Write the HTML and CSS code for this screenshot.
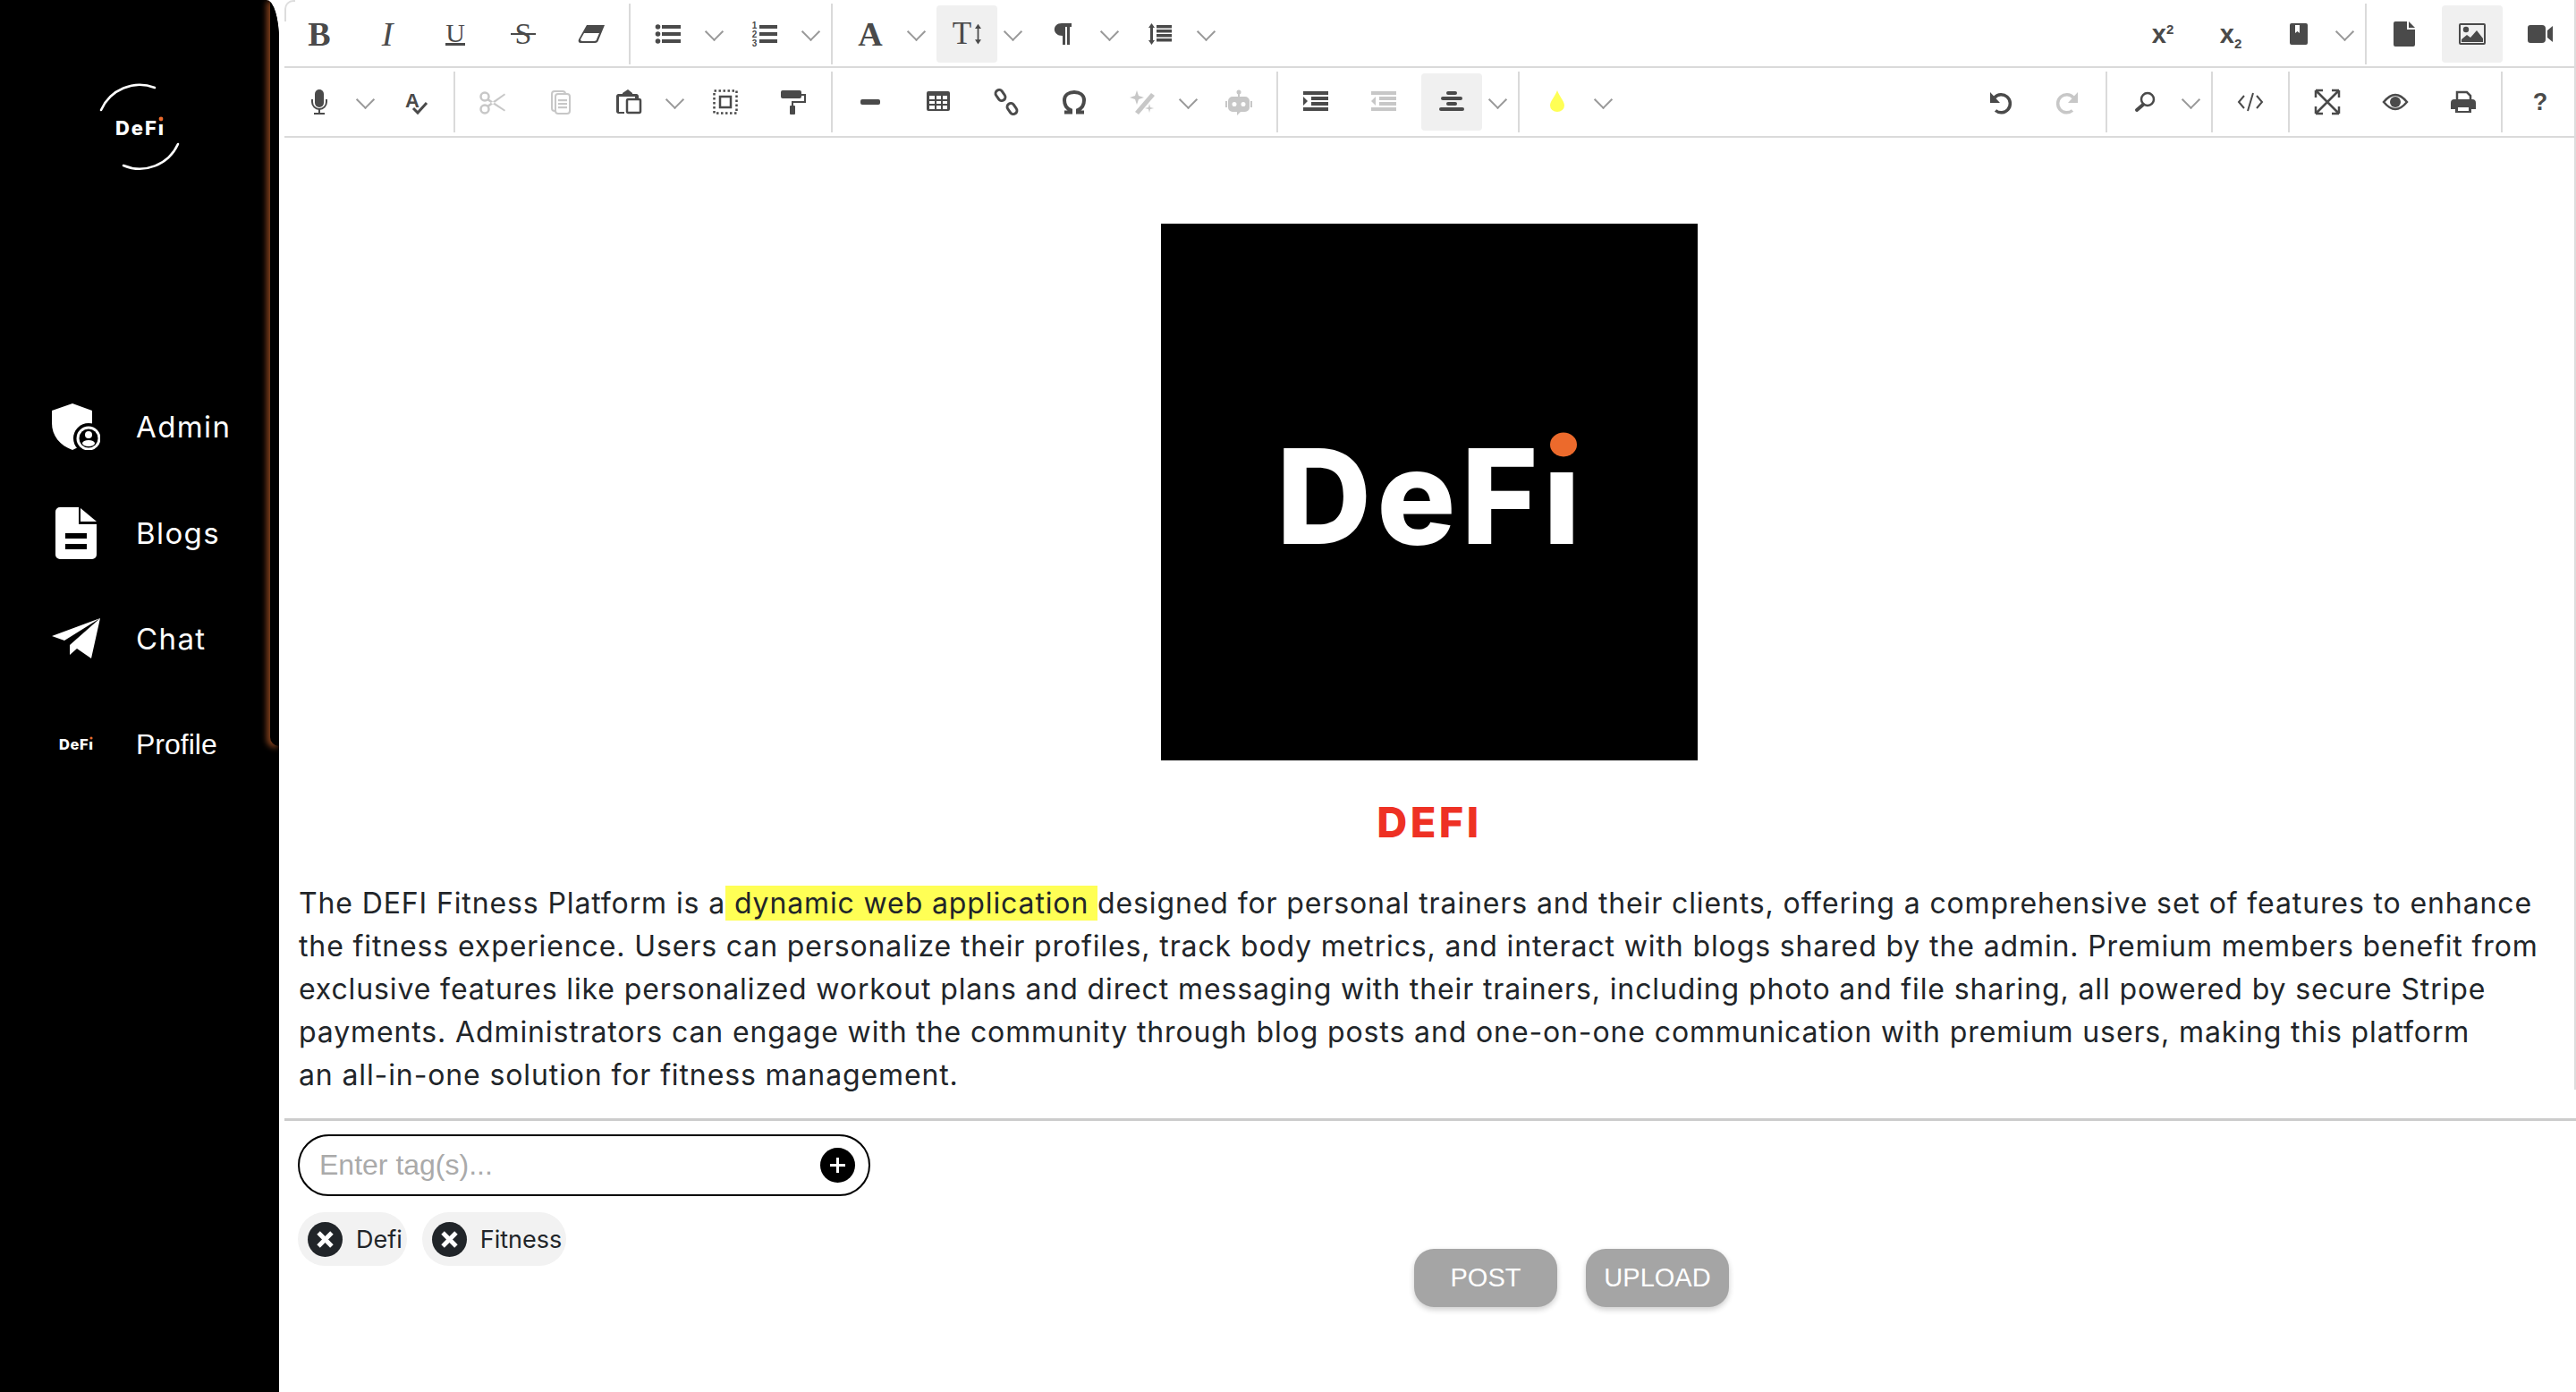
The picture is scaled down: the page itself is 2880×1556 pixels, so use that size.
FILE: index.html
```html
<!DOCTYPE html>
<html>
<head>
	<title>DeFi Blog Editor</title>
	<link rel="stylesheet" href="styles.css">
</head>
<body>
	<aside class="sidebar">
		<div class="brand">
			<svg width="120" height="120" viewBox="0 0 120 120">
				<path d="M17 41A47 47 0 0 1 77 16M103 79A47 47 0 0 1 42 103" fill="none" stroke="#fff" stroke-width="2.6" stroke-linecap="round"/>
				<text x="33" y="69" class="logo-text" font-size="22" textLength="54">DeFı</text>
				<circle cx="84" cy="51" r="2.4" fill="#ec6a2c"/>
			</svg>
		</div>
		<nav class="nav">
			<a class="nav-item">
				<span class="nav-icon">
					<svg width="54" height="52" viewBox="0 0 54 52">
						<path d="M23 0L45 8V24C45 36 36 47 23 52C9 47 0 36 0 22V8Z" fill="#fff"/>
						<circle cx="41" cy="39" r="17" fill="#000"/>
						<circle cx="41" cy="39" r="13.500" fill="#fff"/>
						<circle cx="41" cy="39" r="10.500" fill="#000"/>
						<circle cx="41" cy="35" r="4" fill="#fff"/>
						<ellipse cx="41" cy="44.500" rx="7" ry="3.500" fill="#fff"/>
					</svg>
				</span>
				<span>Admin</span>
			</a>
			<a class="nav-item">
				<span class="nav-icon">
					<svg width="46" height="58" viewBox="0 0 46 58">
						<path d="M5 0H26V19H46V53A5 5 0 0 1 41 58H5A5 5 0 0 1 0 53V5A5 5 0 0 1 5 0ZM11 29V35H35V29ZM11 41V47H35V41Z" fill="#fff" fill-rule="evenodd"/>
						<path d="M28 1L46 16H28Z" fill="#fff"/>
					</svg>
				</span>
				<span>Blogs</span>
			</a>
			<a class="nav-item">
				<span class="nav-icon">
					<svg width="54" height="46" viewBox="0 0 54 46">
						<path d="M54 0L0 20L14 25ZM54 0L20 30V41L28 34L44 45Z" fill="#fff"/>
					</svg>
				</span>
				<span>Chat</span>
			</a>
			<a class="nav-item nav-profile">
				<span class="nav-icon">
					<svg width="40" height="24" viewBox="0 0 40 24">
						<text x="1" y="18" class="logo-text" font-size="16.500" textLength="38">DeFı</text>
						<circle cx="37" cy="5" r="1.600" fill="#ec6a2c"/>
					</svg>
				</span>
				<span>Profile</span>
			</a>
		</nav>
	</aside>

	<main class="main">
		<section class="editor">
			<div class="editor-inner">
				<div class="toolbar">
					<div class="row row-first">
						<button class="tool txt-b">B</button>
						<button class="tool txt-i">I</button>
						<button class="tool txt-u"><span>U</span></button>
						<button class="tool txt-s"><span>S</span></button>
						<button class="tool"><svg viewBox="0 0 30 36"><path d="M10 8H30L23 25A4 4 0 0 1 19 28H3C1 28 0 26 1 24ZM7 17L3 24Q3 26 5 26H18C20 26 21 25 21 24L24 17Z" fill-rule="evenodd"/></svg></button>
						<span class="sep"></span>
						<button class="tool"><svg viewBox="0 0 30 36"><circle cx="3.500" cy="10" r="2.800"/><circle cx="3.500" cy="18" r="2.800"/><circle cx="3.500" cy="26" r="2.800"/><rect x="8" y="8" width="21" height="4"/><rect x="8" y="16" width="21" height="4"/><rect x="8" y="24" width="21" height="4"/></svg></button>
						<span class="chev"></span>
						<button class="tool"><svg viewBox="0 0 30 36"><text x="3.500" y="12" class="glyph-small" text-anchor="middle" font-size="10">1</text><text x="3.500" y="22" class="glyph-small" text-anchor="middle" font-size="10">2</text><text x="3.500" y="32" class="glyph-small" text-anchor="middle" font-size="10">3</text><rect x="9" y="8" width="20" height="4"/><rect x="9" y="16" width="20" height="4"/><rect x="9" y="24" width="20" height="4"/></svg></button>
						<span class="chev"></span>
						<span class="sep"></span>
						<button class="tool txt-b">A</button>
						<span class="chev"></span>
						<button class="tool is-on txt-t">T<svg class="arrow" viewBox="0 0 8 26"><path d="M4 0L8 6H5V20H8L4 26L0 20H3V6H0Z"/></svg></button>
						<span class="chev"></span>
						<button class="tool"><svg viewBox="0 0 30 36"><path d="M13 6H24V10H22V30H19V10H17V30H14V20C2 20 2 6 13 6Z"/></svg></button>
						<span class="chev"></span>
						<button class="tool"><svg viewBox="0 0 30 36"><path d="M5.500 6L9 11H7V25H9L5.500 30L2 25H4V11H2Z"/><rect x="11" y="8" width="17" height="3.500"/><rect x="11" y="13" width="17" height="3.500"/><rect x="11" y="18" width="17" height="3.500"/><rect x="11" y="23" width="17" height="3.500"/></svg></button>
						<span class="chev"></span>

						<span class="push"></span>
						<button class="tool txt-x"><span>x<sup>2</sup></span></button>
						<button class="tool txt-x"><span>x<sub>2</sub></span></button>
						<button class="tool"><svg viewBox="0 0 30 36"><path d="M7 6H23A2 2 0 0 1 25 8V28A2 2 0 0 1 23 30H7A2 2 0 0 1 5 28V8A2 2 0 0 1 7 6ZM11 8V17L13.500 15L16 17V8Z" fill-rule="evenodd"/></svg></button>
						<span class="chev"></span>
						<span class="sep"></span>
						<button class="tool"><svg viewBox="0 0 30 36"><path d="M5 4H18V13H27V30A2 2 0 0 1 25 32H5A2 2 0 0 1 3 30V6A2 2 0 0 1 5 4Z"/><path d="M20 4L27 11H20Z"/></svg></button>
						<button class="tool is-on"><svg viewBox="0 0 30 36"><path d="M2 6H28A2 2 0 0 1 30 8V28A2 2 0 0 1 28 30H2A2 2 0 0 1 0 28V8A2 2 0 0 1 2 6ZM2 8V28H28V8Z" fill-rule="evenodd"/><circle cx="8" cy="13" r="3.200"/><path d="M3 27V24L9 19L13 22L20 14L27 23V27Z"/></svg></button>
						<button class="tool"><svg viewBox="0 0 30 36"><path d="M4 8H17A4 4 0 0 1 21 12V24A4 4 0 0 1 17 28H4A3 3 0 0 1 1 25V11A3 3 0 0 1 4 8ZM23 14L29 9V27L23 22Z"/></svg></button>
					</div>
					<div class="row">
						<button class="tool"><svg viewBox="0 0 30 36"><rect x="10" y="4" width="10" height="20" rx="5"/><path d="M7 15V18A8 8 0 0 0 23 18V15" fill="none" stroke="#4a4a4a" stroke-width="2"/><rect x="14" y="25" width="2" height="6"/><rect x="9" y="30" width="12" height="2"/></svg></button>
						<span class="chev"></span>
						<button class="tool"><svg viewBox="0 0 30 36"><text x="11" y="24" class="glyph-small" text-anchor="middle" font-size="22">A</text><path d="M12 25L17 30L27 19" fill="none" stroke="#4a4a4a" stroke-width="3"/></svg></button>
						<span class="sep"></span>
						<button class="tool is-off"><svg viewBox="0 0 30 36"><g fill="none" stroke="#4a4a4a" stroke-width="2.500"><circle cx="6" cy="12" r="4.500"/><circle cx="6" cy="26" r="4.500"/></g><path d="M10 14L29 27L28 28.500L9 16.500ZM10 24L29 10L28 8.500L9 21.500Z"/></svg></button>
						<button class="tool is-off"><svg viewBox="0 0 30 36"><rect x="5" y="6" width="15" height="22" rx="3" fill="none" stroke="#4a4a4a" stroke-width="2"/><rect x="9" y="9" width="16" height="22" rx="3" fill="#fff" stroke="#4a4a4a" stroke-width="2"/><rect x="12" y="15" width="10" height="2.200"/><rect x="12" y="19" width="10" height="2.200"/><rect x="12" y="23" width="10" height="2.200"/></svg></button>
						<button class="tool"><svg viewBox="0 0 30 36"><path d="M3 9H8V8L14 4L19 8V9H24A3 3 0 0 1 26 11V14H22V12H4V29H10V31H3A2.500 2.500 0 0 1 1 29V11A3 3 0 0 1 3 9Z"/><rect x="13" y="15" width="15" height="15" rx="1.500" fill="none" stroke="#4a4a4a" stroke-width="2.500"/></svg></button>
						<span class="chev"></span>
						<button class="tool"><svg viewBox="0 0 30 36"><rect x="2.500" y="5.500" width="25" height="25" fill="none" stroke="#4a4a4a" stroke-width="2.500" stroke-dasharray="2.500 2.500"/><rect x="9" y="12" width="12" height="12" fill="none" stroke="#4a4a4a" stroke-width="2.500"/></svg></button>
						<button class="tool"><svg viewBox="0 0 30 36"><rect x="1" y="5" width="23" height="9" rx="2"/><path d="M24 10H28V18H14V23" fill="none" stroke="#4a4a4a" stroke-width="2"/><rect x="11" y="22" width="6" height="10" rx="1"/></svg></button>
						<span class="sep"></span>
						<button class="tool"><svg viewBox="0 0 30 36"><rect x="4" y="15" width="22" height="6" rx="2"/></svg></button>
						<button class="tool"><svg viewBox="0 0 30 36"><path d="M4 6H26A2 2 0 0 1 28 8V26A2 2 0 0 1 26 28H4A2 2 0 0 1 2 26V8A2 2 0 0 1 4 6ZM5 11V15H11V11ZM13 11V15H18V11ZM20 11V15H25V11ZM5 17V20H11V17ZM13 17V20H18V17ZM20 17V20H25V17ZM5 22V26H11V22ZM13 22V26H18V22ZM20 22V26H25V22Z" fill-rule="evenodd"/></svg></button>
						<button class="tool"><svg viewBox="0 0 30 36"><g fill="none" stroke="#4a4a4a" stroke-width="3"><rect x="4.500" y="4" width="8" height="13" rx="4" transform="rotate(-35 8.500 10.500)"/><rect x="17.500" y="19" width="8" height="13" rx="4" transform="rotate(-35 21.500 25.500)"/></g></svg></button>
						<button class="tool"><svg viewBox="0 0 30 36"><path d="M4 29.500H11V27C6 25 4 21 4 16C4 10 9 7 15 7S26 10 26 16C26 21 24 25 19 27V29.500H26" fill="none" stroke="#4a4a4a" stroke-width="4"/></svg></button>
						<button class="tool is-off"><svg viewBox="0 0 30 36"><path d="M25 8L29 11L11 32L7 29Z"/><path d="M9 5L11 11L17 13L11 15L9 21L7 15L1 13L7 11ZM23 20L24 24L28 25L24 26L23 30L22 26L18 25L22 24Z"/></svg></button>
						<span class="chev"></span>
						<button class="tool is-off"><svg viewBox="0 0 30 36"><circle cx="15" cy="7" r="2.500"/><rect x="14" y="7" width="2" height="6"/><path d="M8 12H22A5 5 0 0 1 27 17V24A5 5 0 0 1 22 29H17L13 33V29H8A5 5 0 0 1 3 24V17A5 5 0 0 1 8 12ZM10 18A2.500 2.500 0 1 0 10 23A2.500 2.500 0 1 0 10 18ZM20 18A2.500 2.500 0 1 0 20 23A2.500 2.500 0 1 0 20 18Z" fill-rule="evenodd"/><rect x="0" y="17" width="2" height="7"/><rect x="28" y="17" width="2" height="7"/></svg></button>
						<span class="sep"></span>
						<button class="tool"><svg viewBox="0 0 30 36"><rect x="1" y="6" width="28" height="4"/><rect x="10" y="12" width="19" height="4"/><rect x="10" y="18" width="19" height="4"/><rect x="1" y="24" width="28" height="4"/><path d="M1 12L6 17L1 22Z"/></svg></button>
						<button class="tool is-off"><svg viewBox="0 0 30 36"><rect x="1" y="6" width="28" height="4"/><rect x="10" y="12" width="19" height="4"/><rect x="10" y="18" width="19" height="4"/><rect x="1" y="24" width="28" height="4"/><path d="M6 12L1 17L6 22Z"/></svg></button>
						<button class="tool is-on"><svg viewBox="0 0 30 36"><rect x="9" y="6" width="12" height="4" rx="2"/><rect x="3" y="12" width="24" height="4" rx="2"/><rect x="9" y="18" width="12" height="4" rx="2"/><rect x="1" y="24" width="28" height="4" rx="2"/></svg></button>
						<span class="chev"></span>
						<span class="sep"></span>
						<button class="tool"><svg viewBox="0 0 30 36"><path d="M15 5C17 11 23 17 23 22A8 7 0 0 1 7 22C7 17 13 11 15 5Z" fill="#ffff55"/></svg></button>
						<span class="chev"></span>

						<span class="push"></span>
						<button class="tool"><svg viewBox="0 0 30 36"><path d="M9 13A10 10 0 1 1 10 27.500" fill="none" stroke="#4a4a4a" stroke-width="3.500"/><path d="M4 7V19H15Z"/></svg></button>
						<button class="tool is-off"><svg viewBox="0 0 30 36"><path d="M21 13A10 10 0 1 0 20 27.500" fill="none" stroke="#4a4a4a" stroke-width="3.500"/><path d="M26 7V19H15Z"/></svg></button>
						<span class="sep"></span>
						<button class="tool"><svg viewBox="0 0 30 36"><circle cx="18" cy="15" r="7" fill="none" stroke="#4a4a4a" stroke-width="2.500"/><path d="M13 21L6 27" stroke="#4a4a4a" stroke-width="4" stroke-linecap="round"/></svg></button>
						<span class="chev"></span>
						<span class="sep"></span>
						<button class="tool"><svg viewBox="0 0 30 36"><path d="M8 11L2 18L8 25M22 11L28 18L22 25M18 8L12 28" fill="none" stroke="#4a4a4a" stroke-width="2"/></svg></button>
						<span class="sep"></span>
						<button class="tool"><svg viewBox="0 0 30 36"><path d="M2 5H10M2 5V13M28 5H20M28 5V13M2 31H10M2 31V23M28 31H20M28 31V23M2 5L28 31M28 5L2 31" fill="none" stroke="#4a4a4a" stroke-width="2.500"/></svg></button>
						<button class="tool"><svg viewBox="0 0 30 36"><path d="M2 18C7 12 11 10 15 10S23 12 28 18C23 24 19 26 15 26S7 24 2 18Z" fill="none" stroke="#4a4a4a" stroke-width="2.500"/><circle cx="15" cy="18" r="6"/></svg></button>
						<button class="tool"><svg viewBox="0 0 30 36"><path d="M8 7H19L23 11V17H8Z" fill="none" stroke="#4a4a4a" stroke-width="2.500"/><path d="M5 15H25A4 4 0 0 1 29 19V26H24V30H6V26H1V19A4 4 0 0 1 5 15ZM9 24V28H21V24Z" fill-rule="evenodd"/></svg></button>
						<span class="sep"></span>
						<button class="tool txt-help">?</button>
					</div>
				</div>

				<div class="content">
					<div class="cover">
						<svg width="600" height="600" viewBox="0 0 600 600">
							<text x="129" y="358" class="logo-text" font-size="147" textLength="340">DeFı</text>
							<ellipse cx="450" cy="247" rx="15" ry="13.500" fill="#ec6a2c"/>
						</svg>
					</div>
					<h2 class="title">DEFI</h2>
					<p class="body-text">The DEFI Fitness Platform is a<mark class="mark"> dynamic web application </mark>designed for personal trainers and their clients, offering a comprehensive set of features to enhance the fitness experience. Users can personalize their profiles, track body metrics, and interact with blogs shared by the admin. Premium members benefit from exclusive features like personalized workout plans and direct messaging with their trainers, including photo and file sharing, all powered by secure Stripe payments. Administrators can engage with the community through blog posts and one-on-one communication with premium users, making this platform<br>an all-in-one solution for fitness management.</p>
				</div>
			</div>
		</section>

		<div class="footer">
			<div class="tags">
				<div class="tag-input">
					<input type="text" placeholder="Enter tag(s)...">
					<span class="tag-add"></span>
				</div>
				<div class="chips">
					<span class="chip"><span class="chip-x"></span>Defi</span>
					<span class="chip"><span class="chip-x"></span>Fitness</span>
				</div>
			</div>
			<div class="actions">
				<button class="btn">POST</button>
				<button class="btn">UPLOAD</button>
			</div>
		</div>
	</main>
</body>
</html>
```

FILE: styles.css
```css
* {
	box-sizing: border-box;
}
html, body {
	height: 100%;
	margin: 0;
	background-color: white;
}
body {
	display: flex;
	height: 1556px;
	overflow: hidden;
	font-family: 'Inter', sans-serif;
	color: #212529;
}

/* sidebar */
.sidebar {
	position: relative;
	width: 312px;
	flex: none;
	overflow: hidden;
	background-color: black;
	color: white;
	border-top-right-radius: 14px 45px;
}
/* the brown edge, it curls round under the black strip */
.sidebar::after {
	content: '';
	position: absolute;
	top: 0;
	left: 302px;
	width: 12px;
	height: 834px;
	background-color: black;
	border-bottom-left-radius: 10px;
	box-shadow: -4px 2px 6px #7f3f1c;
}
.brand {
	height: 418px;
	padding: 82px 0 0 96px;
}
.logo-text {
	font-family: 'Inter', sans-serif;
	font-weight: 800;
	fill: white;
}
.nav {
	display: flex;
	flex-direction: column;
}
.nav-item {
	display: flex;
	align-items: center;
	height: 118.6px;
	font-size: 33px;
	letter-spacing: 1.4px;
}
.nav-icon {
	display: flex;
	justify-content: center;
	width: 54px;
	margin: 0 40px 0 58px;
}
.nav-profile {
	padding-bottom: 2px;
	font-family: 'Liberation Sans', sans-serif;
	font-size: 32px;
	letter-spacing: 0;
}

/* editor */
.main {
	flex: 1;
	min-width: 0;
	display: flex;
	flex-direction: column;
}
.editor {
	height: 1253px;
	margin-left: 6px;
	border-bottom: 3px solid #cccccc;
}
.editor-inner {
	height: 1218px;
	border-right: 2px solid #dddddd;
}
.toolbar {
	position: relative;
}
.toolbar::before {
	content: '';
	position: absolute;
	top: 0;
	left: 0;
	width: 10px;
	height: 22px;
	border-left: 2px solid #dddddd;
	border-top: 2px solid #dddddd;
	border-top-left-radius: 10px;
}
.row {
	display: flex;
	align-items: center;
	height: 78px;
	padding-left: 1px;
	border-bottom: 2px solid #dadada;
}
.row-first {
	height: 76px;
	padding-top: 2px;
}
.push {
	flex: 1;
}
.tool {
	display: flex;
	align-items: center;
	justify-content: center;
	width: 68px;
	height: 64px;
	margin: 0 4px;
	padding: 0;
	border: none;
	border-radius: 4px;
	background: transparent;
	color: #4a4a4a;
	fill: #4a4a4a;
}
.tool svg {
	width: 30px;
	height: 36px;
}
.tool.is-on {
	background-color: #f0f0f0;
}
.tool.is-off svg {
	opacity: 0.3;
}
.txt-b {
	font: 700 38px 'Liberation Serif', serif;
}
.txt-i {
	font: italic 400 38px 'Liberation Serif', serif;
}
.txt-u span {
	display: block;
	height: 25px;
	font: 400 30px/22px 'Liberation Serif', serif;
	border-bottom: 3px solid #4a4a4a;
}
.txt-s span {
	position: relative;
	font: 400 34px/30px 'Liberation Serif', serif;
}
.txt-s span::after {
	content: '';
	position: absolute;
	left: -5px;
	right: -5px;
	top: 14px;
	height: 2px;
	background-color: #4a4a4a;
}
.txt-t {
	gap: 4px;
	font: 400 35px 'Liberation Serif', serif;
}
.tool svg.arrow {
	width: 7px;
	height: 24px;
}
.txt-x {
	font: 700 29px/36px 'Liberation Sans', sans-serif;
}
.txt-x sup, .txt-x sub {
	font-size: 15px;
	line-height: 0;
}
.txt-x sup {
	vertical-align: 10px;
}
.txt-x sub {
	vertical-align: -6px;
}
.txt-help {
	font: 700 27px 'Liberation Sans', sans-serif;
}
.tool + .chev {
	margin-left: -4px;
}
.chev {
	position: relative;
	width: 32px;
	height: 64px;
	margin-right: 4px;
}
.chev::after {
	content: '';
	position: absolute;
	top: 22px;
	left: 9.5px;
	width: 13px;
	height: 13px;
	border-right: 2px solid #999999;
	border-bottom: 2px solid #999999;
	transform: rotate(45deg);
}
.sep {
	width: 2px;
	height: 68px;
	margin: 0 4px;
	background-color: #dadada;
}
.glyph-small {
	font-family: 'Liberation Sans', sans-serif;
	font-weight: 700;
}

.content {
	padding: 96px 16px 0;
}
.cover {
	width: 600px;
	height: 600px;
	margin: 0 auto;
	background-color: black;
}
.title {
	margin: 46px 0 0;
	text-align: center;
	font-size: 47px;
	line-height: 46px;
	font-weight: 800;
	letter-spacing: 3.5px;
	color: #ee3124;
}
.body-text {
	margin: 44px 0 0;
	font-size: 32px;
	line-height: 48px;
	letter-spacing: 0.88px;
}
.mark {
	background-color: #ffff55;
	color: inherit;
}

/* tags + buttons */
.footer {
	display: flex;
	padding: 15px 0 0 21px;
}
.tags {
	width: 640px;
}
.tag-input {
	display: flex;
	align-items: center;
	height: 69px;
	padding: 0 15px 0 22px;
	border: 2px solid black;
	border-radius: 35px;
}
.tag-input input {
	flex: 1;
	min-width: 0;
	padding: 0;
	border: none;
	outline: none;
	font-family: 'Liberation Sans', sans-serif;
	font-size: 32px;
}
.tag-input input::placeholder {
	color: #aaaaaa;
}
.tag-add {
	position: relative;
	width: 39px;
	height: 39px;
	border-radius: 50%;
	background-color: black;
}
.tag-add::before, .tag-add::after {
	content: '';
	position: absolute;
	background-color: white;
}
.tag-add::before {
	left: 11px;
	top: 18px;
	width: 17px;
	height: 3px;
}
.tag-add::after {
	left: 18px;
	top: 11px;
	width: 3px;
	height: 17px;
}
.chips {
	display: flex;
	gap: 17px;
	margin-top: 18px;
}
.chip {
	display: flex;
	align-items: center;
	height: 60px;
	padding: 0 5px 0 11px;
	border-radius: 30px;
	background-color: #f2f2f2;
	font-size: 27px;
}
.chip-x {
	position: relative;
	width: 39px;
	height: 39px;
	margin-right: 15px;
	border-radius: 50%;
	background-color: #212529;
}
.chip-x::before, .chip-x::after {
	content: '';
	position: absolute;
	left: 9px;
	top: 17px;
	width: 21px;
	height: 5px;
	background-color: white;
}
.chip-x::before {
	transform: rotate(45deg);
}
.chip-x::after {
	transform: rotate(-45deg);
}
.actions {
	display: flex;
	gap: 32px;
	margin-left: 608px;
	padding-top: 128px;
	align-items: flex-start;
}
.btn {
	width: 160px;
	height: 65px;
	border: none;
	border-radius: 22px;
	background-color: #a5a5a5;
	color: white;
	font-family: 'Liberation Sans', sans-serif;
	font-size: 29px;
	box-shadow: 0 3px 6px rgba(0, 0, 0, 0.2);
}
```
